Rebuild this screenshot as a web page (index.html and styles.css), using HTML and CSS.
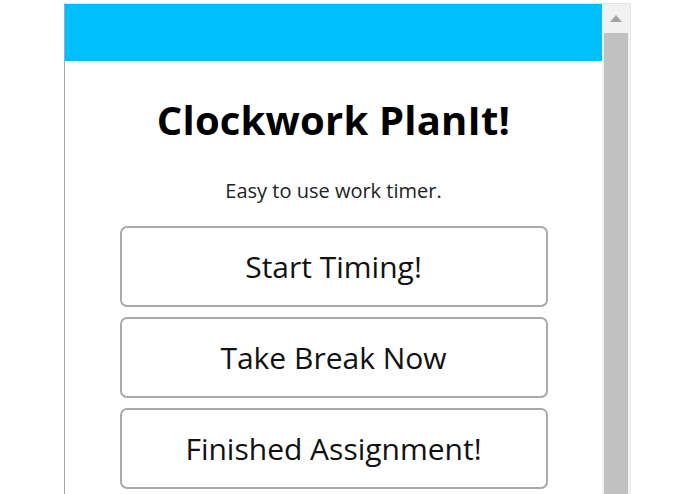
FILE: index.html
```html
<!DOCTYPE html>
<html lang="en">
<head>
<meta charset="utf-8">
<title>Clockwork PlanIt!</title>
<link rel="stylesheet" href="styles.css">
</head>
<body>
<div class="frame">
  <main class="popup">
    <header class="topbar"></header>
    <h1 class="title">Clockwork PlanIt!</h1>
    <p class="tagline">Easy to use work timer.</p>
    <div class="actions">
      <button class="action">Start Timing!</button>
      <button class="action">Take Break Now</button>
      <button class="action">Finished Assignment!</button>
    </div>
  </main>
  <div class="scrollbar">
    <div class="scroll-up"><svg width="12" height="7" viewBox="0 0 12 7"><polygon points="6,0 12,7 0,7" fill="#a3a3a3"/></svg></div>
    <div class="scroll-thumb"></div>
  </div>
</div>
</body>
</html>
```
FILE: styles.css
```css
html, body {
  margin: 0;
  padding: 0;
  background: #ffffff;
  overflow: hidden;
}
body {
  font-family: "Open Sans", "Noto Sans", sans-serif;
  color: #111;
}
.frame {
  display: flex;
  margin: 3px 0 0 64px;
  width: 567px;
  height: 491px;
  border-left: 1px solid #a8a8a8;
  border-top: 1px solid #e4e4e4;
  box-sizing: border-box;
}
.popup {
  flex: 1;
  display: flex;
  flex-direction: column;
  align-items: center;
  background: #fff;
}
.topbar {
  align-self: stretch;
  height: 57px;
  background: #00bfff;
}
.title {
  margin: 35px 0 0;
  font-size: 40px;
  font-weight: 700;
  line-height: 48px;
  color: #000;
  letter-spacing: 0.2px;
}
.tagline {
  margin: 35px 0 0;
  font-size: 20px;
  line-height: 24px;
  color: #222;
}
.actions {
  margin-top: 23px;
  display: flex;
  flex-direction: column;
  gap: 10px;
}
.action {
  width: 428px;
  height: 81px;
  box-sizing: border-box;
  border: 2px solid #aaaaaa;
  border-radius: 7px;
  background: #fff;
  font-family: "Open Sans", "Noto Sans", sans-serif;
  font-size: 30px;
  color: #111;
  padding: 0;
}
.scrollbar {
  width: 28px;
  background: #f1f1f1;
  display: flex;
  flex-direction: column;
  align-items: center;
  border-right: 1px solid #e8e8e8;
}
.scroll-up {
  height: 29px;
  display: flex;
  align-items: center;
  justify-content: center;
}
.scroll-thumb {
  flex: 1;
  width: 24px;
  background: #c1c1c1;
}
```
